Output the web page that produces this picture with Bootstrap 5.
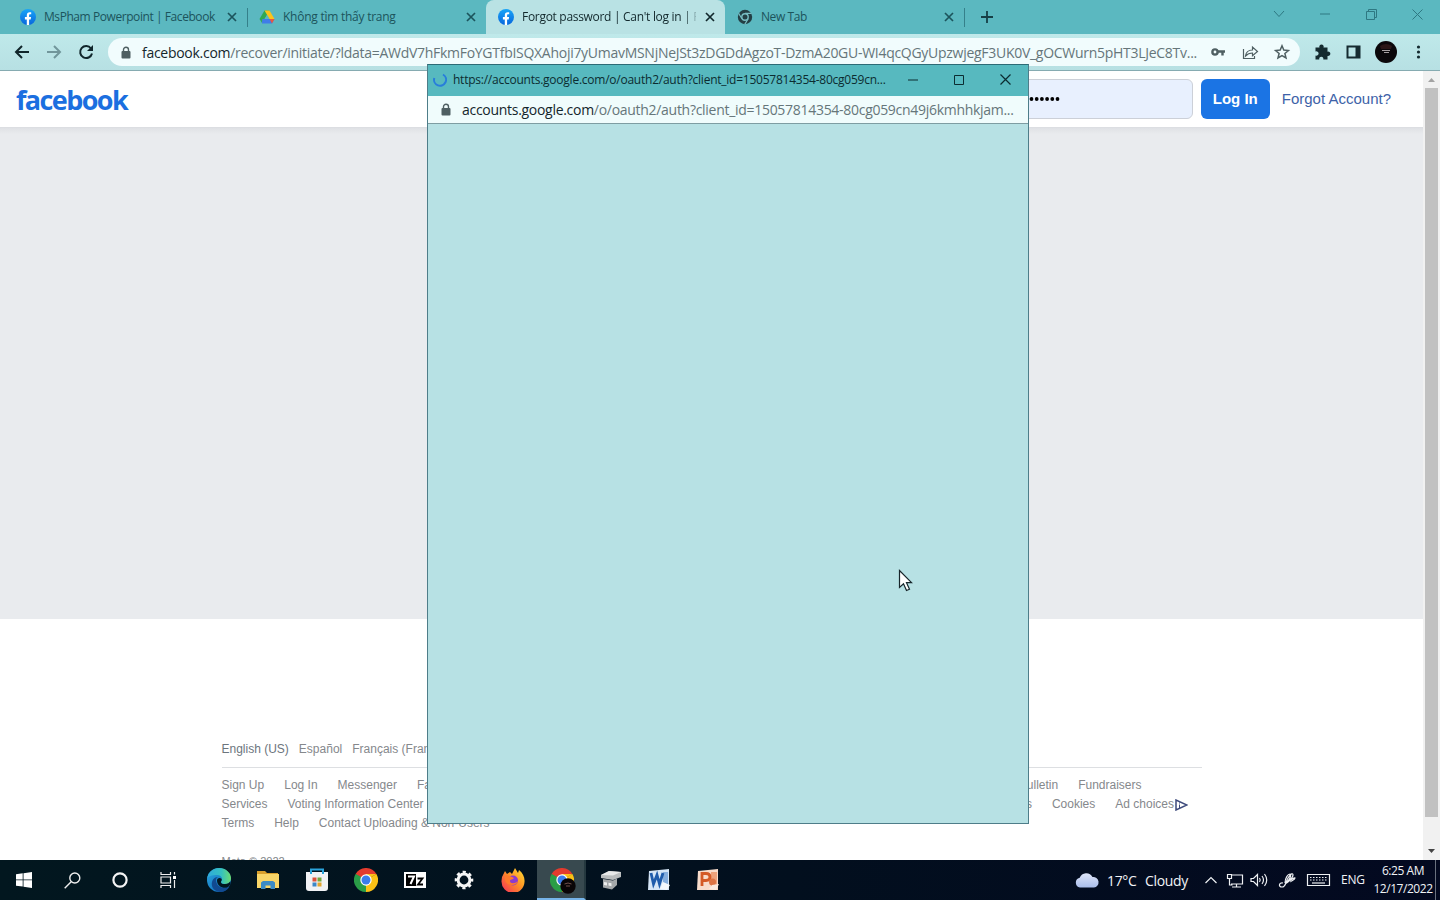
<!DOCTYPE html>
<html lang="en">
<head>
<meta charset="utf-8">
<title>Forgot password | Can't log in | Facebook</title>
<link rel="stylesheet" href="https://cdn.jsdelivr.net/npm/bootstrap@5.3.0/dist/css/bootstrap.min.css">
<script src="https://cdn.jsdelivr.net/npm/bootstrap@5.3.0/dist/js/bootstrap.bundle.min.js"></script>
<style>
body{width:1440px;height:900px;overflow:hidden;background:#fff;font-family:"Open Sans","Noto Sans",sans-serif;font-size:12px;line-height:1}
svg{display:block;flex:none}
.tabstrip{height:34px;background:#5bb8c0;padding-left:8px}
.btab{width:239px;height:34px;padding:0 10px 0 12px;color:#1c545c;position:relative}
.btab .ttl{width:174px;margin-left:8px;letter-spacing:-.25px}
.btab .tight{letter-spacing:-.43px}
.btab.on{background:#b9e2e4;color:#12282c;border-radius:8px 8px 0 0}
.btab.on .ttl{letter-spacing:-.3px;-webkit-mask-image:linear-gradient(90deg,#000 93%,transparent 102%)}
.btab.sep::after{content:"";position:absolute;right:-1px;top:8px;width:1px;height:19px;background:#35808a}
.wbtn{width:46px;height:28px;color:#2e7882}
.toolbar{height:37px;background:linear-gradient(#bfe9ea,#b7e0e3);border-bottom:1px solid #86abb1}
.omni{width:1192px;height:28px;border-radius:14px;background:#f1fcfd;margin-left:8px;padding-left:12px}
.url{font-size:14px;color:#66767a;width:1064px;margin-left:10px;letter-spacing:-.28px}
.url b,.purl b{font-weight:400;color:#14262b}
.view{height:789px}
.fbhead{height:57px;border-bottom:1px solid #dcdee2;font-family:"Liberation Sans",sans-serif;padding:0 32px 0 16px}
.fblogo{font:700 27px/30px "Open Sans",sans-serif;color:#1b6fe0;letter-spacing:-1.6px;padding-top:2px}
.pwd{width:190px;height:40px;border:1px solid #ccd0d8;border-radius:6px;background:#e8f0fe;color:#000;padding-left:24px}
.login{width:69px;height:40px;border-radius:6px;background:#1b74e4;color:#fff;font-size:15px;font-weight:700;margin:0 12px 0 8px;padding-bottom:2px}
.forgot{font-size:15px;color:#3d62a8;padding-bottom:2px}
.grayarea{height:491px;background:linear-gradient(#dfe1e5,#e9ebee 6px)}
.foot{width:980px;margin:124px 0 0 221.5px;font:12px/19px "Liberation Sans",sans-serif;color:#85888c}
.langs{height:25px;border-bottom:1px solid #dddfe2;margin-bottom:8px;line-height:12px}
.lk{gap:20px;height:19px;white-space:nowrap}
.sbar{width:17px;background:#f1f1f1}
.thumb{width:13px;height:729px;background:#c1c1c1}
.popup{position:absolute;left:427px;top:64px;width:602px;height:760px;border:1px solid #4e7d89;border-top-color:#2d6b76;background:#b7e1e4}
.ptitle{height:31px;background:#57b9bf;color:#0c2c31;padding:0 0 2px 5px}
.ptxt{width:437px;margin-left:6px;letter-spacing:-.24px}
.pw{width:46px}
.purlbar{height:28px;background:#f0fcfc;border-bottom:1px solid #7e9da2;padding-left:13px}
.purl{font-size:14px;color:#66767a;margin-left:11px;letter-spacing:-.29px}
.cursor{position:absolute;left:898px;top:569px}
.task{height:40px;background:linear-gradient(90deg,#02171f,#020f1e 55%,#030920);color:#f1f3f6;position:relative}
.ti{width:48px;height:40px}
.ta{width:48.9px;height:40px}
.ta.on{background:#38494f;border-bottom:2px solid #76b3e8;border-right:2px solid #25383f}
.weather{font-size:14px;margin-left:7px;width:93px;letter-spacing:-.35px}
.clock{width:64px;line-height:18px;text-align:center;letter-spacing:-.45px}
</style>
</head>
<body>
<svg width="0" height="0" class="position-absolute">
<defs>
<linearGradient id="fbg" x2="0" y2="1"><stop stop-color="#19a5f7"/><stop offset="1" stop-color="#0866dd"/></linearGradient>
<linearGradient id="edge" x2="1" y2="1"><stop stop-color="#2aa7e0"/><stop offset="1" stop-color="#0c5fb3"/></linearGradient>
<linearGradient id="edg2"><stop stop-color="#2fa9dd"/><stop offset=".6" stop-color="#35c1c0"/><stop offset="1" stop-color="#6bdc72"/></linearGradient>
<linearGradient id="ffx" x1="1" x2="0" y2="1"><stop stop-color="#ffe234"/><stop offset=".45" stop-color="#ff9324"/><stop offset="1" stop-color="#f5295c"/></linearGradient>
<linearGradient id="cld" x2="0" y2="1"><stop stop-color="#dfe6f8"/><stop offset="1" stop-color="#a9bdea"/></linearGradient>
<symbol id="fb" viewBox="0 0 16 16"><circle cx="8" cy="8" r="8" fill="url(#fbg)"/><path fill="#fff" d="M6.8 16v-5.6H4.9V8h1.9V6.4c0-2 1.1-3.1 2.9-3.1.7 0 1.5.1 1.5.1v1.9h-1c-.9 0-1.1.6-1.1 1.1V8h2l-.4 2.4H9.1V16z"/></symbol>
<symbol id="x" viewBox="0 0 10 10"><path d="M1 1l8 8M9 1l-8 8" stroke="currentColor" stroke-width="1.7"/></symbol>
<symbol id="lock" viewBox="0 0 10 13"><path d="M2.5 6V3.7a2.5 2.5 0 0 1 5 0V6" fill="none" stroke="#4f5f62" stroke-width="1.4"/><rect x=".5" y="5" width="9" height="7.5" rx="1" fill="#4f5f62"/></symbol>
<symbol id="chrome" viewBox="0 0 24 24"><path d="M12 12L1.6 6A12 12 0 0 1 22.4 6z" fill="#e33b2e"/><path d="M12 12L1.6 6A12 12 0 0 0 12 24z" fill="#2a9d47"/><path d="M12 12L22.4 6A12 12 0 0 1 12 24z" fill="#fbc116"/><path d="M12 6h10.4L12 12z" fill="#fbc116"/><path d="M1.6 6l5.2 9L12 12z" fill="#2a9d47"/><path d="M17.2 15L12 24 12 12z" fill="#fbc116"/><path d="M1.6 6H12v6z" fill="#e33b2e"/><path d="M1.6 6l5.2 9 2-5z" fill="#2a9d47"/><circle cx="12" cy="12" r="5.7" fill="#fff"/><circle cx="12" cy="12" r="4.5" fill="#3b7dec"/></symbol>
</defs>
</svg>

<div class="tabstrip d-flex align-items-start">
  <div class="btab sep d-flex align-items-center"><svg width="16" height="16"><use href="#fb"/></svg><div class="ttl tight text-nowrap lh-base">MsPham Powerpoint | Facebook</div><svg class="ms-auto" width="10" height="10"><use href="#x"/></svg></div>
  <div class="btab d-flex align-items-center"><svg width="16" height="16" viewBox="0 0 16 16"><path d="M5.5 1.5h5L8 6 3 14 .5 10z" fill="#31a853"/><path d="M5.500 1.500h5L15.500 10h-5z" fill="#fbc31c"/><path d="M3.200 10h12.300L13 14.500H3z" fill="#3f7de8"/><path d="M10.600 10h4.900L13 14.500z" fill="#e9573f"/><path d="M8 6l2.400 4H5.600z" fill="#5bb8c0"/></svg><div class="ttl text-nowrap lh-base">Không tìm thấy trang</div><svg class="ms-auto" width="10" height="10"><use href="#x"/></svg></div>
  <div class="btab on d-flex align-items-center"><svg width="16" height="16"><use href="#fb"/></svg><div class="ttl text-nowrap overflow-hidden lh-base">Forgot password | Can't log in | F</div><svg class="ms-auto" width="10" height="10"><use href="#x"/></svg></div>
  <div class="btab sep d-flex align-items-center"><svg width="16" height="16" viewBox="0 0 16 16"><circle cx="8" cy="8" r="7.200" fill="#233f45"/><circle cx="8" cy="8" r="3.200" fill="none" stroke="#77bdc3" stroke-width="1.400"/><path d="M8 4.400h6.600M4.900 9.800L1.600 4.200M11.100 9.800L7.800 15.400" stroke="#77bdc3" stroke-width="1.200"/></svg><div class="ttl tight text-nowrap lh-base">New Tab</div><svg class="ms-auto" width="10" height="10"><use href="#x"/></svg></div>
  <svg class="align-self-center" width="29" height="12"><path d="M23 0v12M17 6h12" stroke="#163f46" stroke-width="1.800"/></svg>
  <div class="d-flex ms-auto">
    <div class="wbtn d-flex align-items-center justify-content-center"><svg width="12" height="8"><path d="M1 1l5 5.500L11 1" fill="none" stroke="currentColor"/></svg></div>
    <div class="wbtn d-flex align-items-center justify-content-center"><svg width="10" height="2"><path d="M0 1h10" stroke="currentColor"/></svg></div>
    <div class="wbtn d-flex align-items-center justify-content-center"><svg width="11" height="11"><path d="M.5 2.500h8v8h-8zM2.500 2.500v-2h8v8h-2" fill="none" stroke="currentColor"/></svg></div>
    <div class="wbtn d-flex align-items-center justify-content-center"><svg width="11" height="11"><path d="M.5.5l10 10M10.500.5l-10 10" stroke="currentColor"/></svg></div>
  </div>
</div>

<div class="toolbar d-flex align-items-center">
  <svg width="100" height="16" viewBox="0 0 100 16" fill="none" stroke-width="2"><path d="M29 8H16M22 2l-6 6 6 6" stroke="#10262b"/><path d="M47 8h13M54 2l6 6-6 6" stroke="#71969b"/><path d="M91 4.500A6 6 0 1 0 92 9.500" stroke="#10262b"/><path d="M93 1v6h-6z" fill="#10262b"/></svg>
  <div class="omni d-flex align-items-center">
    <svg width="12" height="13"><use href="#lock"/></svg>
    <div class="url text-nowrap lh-base"><b>facebook.com</b>/recover/initiate/?ldata=AWdV7hFkmFoYGTfbISQXAhoji7yUmavMSNjNeJSt3zDGDdAgzoT-DzmA20GU-WI4qcQGyUpzwjegF3UK0V_gOCWurn5pHT3LJeC8Tv...</div>
    <svg class="ms-1" width="86" height="16" viewBox="0 0 86 16" fill="none" stroke="#4f5f62" stroke-width="1.300"><circle cx="5" cy="8" r="2.600" stroke-width="2.400"/><path d="M8 7.500h7M12.500 7.500v4" stroke-width="2.400"/><path d="M33.500 5v9.500h11V12M35.500 12c.5-4 3-6 7-6V3l5 4.500-5 4.300V9c-3 0-5 .8-7 3z" stroke-width="1.200"/><path d="M72 1.800l1.800 4.300 4.600.4-3.500 3 1.100 4.500-4-2.400-4 2.400 1.100-4.500-3.500-3 4.600-.4z" stroke-width="1.500"/></svg>
  </div>
  <svg width="130" height="24" viewBox="1305 0 130 24" style="margin-left:5px"><path d="M1315.500 7.500h4a2.200 2.200 0 1 1 4 0h4v4.200a2.200 2.200 0 1 1 0 4.200v3.600h-4.200a2.100 2.100 0 1 0-4 0h-3.800v-4a2.200 2.200 0 1 0 0-4z" fill="#152b30"/><path d="M1347.500 6.500h12v11h-12z" fill="none" stroke="#152b30" stroke-width="2"/><path d="M1355.500 6h4.500v12h-4.500z" fill="#152b30"/><circle cx="1386" cy="12" r="11" fill="#0b080b"/><path d="M1380 6q6-4 12 0l-1 3h-10z" fill="#2b1718"/><path d="M1382 10.500h8M1384 12.500h5" stroke="#a7a0a2"/><g fill="#152b30"><circle cx="1418.500" cy="7" r="1.600"/><circle cx="1418.500" cy="12" r="1.600"/><circle cx="1418.500" cy="17" r="1.600"/></g></svg>
</div>

<div class="view d-flex">
  <div class="flex-grow-1 overflow-hidden">
    <div class="fbhead d-flex align-items-center">
      <div class="fblogo">facebook</div>
      <div class="pwd ms-auto d-flex align-items-center"><svg width="34" height="6"><g fill="#000"><circle cx="3.500" cy="3" r="1.900"/><circle cx="8.700" cy="3" r="1.900"/><circle cx="13.900" cy="3" r="1.900"/><circle cx="19.100" cy="3" r="1.900"/><circle cx="24.300" cy="3" r="1.900"/><circle cx="29.500" cy="3" r="1.900"/></g></svg></div>
      <div class="login d-flex align-items-center justify-content-center">Log In</div>
      <div class="forgot">Forgot Account?</div>
    </div>
    <div class="grayarea"></div>
    <div class="foot">
      <div class="langs d-flex gap-2"><span class="text-secondary me-1" style="margin-right:2px!important">English (US)</span><span style="margin-right:2px">Español</span><span>Français (France)</span></div>
      <div class="lk d-flex" style="width:920px"><span>Sign Up</span><span>Log In</span><span>Messenger</span><span>Facebook Lite</span><span class="ms-auto">Bulletin</span><span>Fundraisers</span></div>
      <div class="lk d-flex" style="width:966.500px"><span>Services</span><span>Voting Information Center</span><span class="ms-auto">Careers</span><span>Cookies</span><span class="d-flex align-items-center">Ad choices<svg style="margin-left:1px" width="13" height="12"><path d="M1 1v10l11-5z" fill="#fff" stroke="#3d4a7c" stroke-width="1.500"/><path d="M4.500 3.500v1M4.500 5.500v3.500" stroke="#3d4a7c"/></svg></span></div>
      <div class="lk d-flex"><span>Terms</span><span>Help</span><span>Contact Uploading &amp; Non-Users</span></div>
      <div style="font-size:11px;margin-top:19px">Meta © 2022</div>
    </div>
  </div>
  <div class="sbar d-flex flex-column align-items-center justify-content-between">
    <svg width="17" height="17"><path d="M5 11h7L8.500 7z" fill="#a3a3a3"/></svg>
    <div class="thumb"></div><div class="flex-grow-1"></div>
    <svg width="17" height="17"><path d="M5 6h7L8.500 10z" fill="#444"/></svg>
  </div>
</div>

<div class="task d-flex align-items-center">
  <div class="ti d-flex align-items-center justify-content-center"><svg width="16" height="16" fill="#fff"><path d="M0 2.200L6.700 1.300v6.200H0zM7.500 1.200L16 0v7.500H7.500zM0 8.300h6.700v6.300L0 13.700zM7.500 8.300H16V16l-8.500-1.200z"/></svg></div>
  <div class="ti d-flex align-items-center justify-content-center"><svg width="17" height="17" fill="none" stroke="#eee" stroke-width="1.400"><circle cx="10.800" cy="6" r="5"/><path d="M7.200 9.700L.7 16.300"/></svg></div>
  <div class="ti d-flex align-items-center justify-content-center"><svg width="16" height="16"><circle cx="8" cy="8" r="6.600" fill="none" stroke="#f4f4f4" stroke-width="2.200"/></svg></div>
  <div class="ti d-flex align-items-center justify-content-center"><svg width="17" height="16" fill="none" stroke="#eee" stroke-width="1.200"><path d="M1 0v2.500h9.500V0M1 5h9.500v6H1zM1 16v-2.500h9.500V16M14.500 0v2.500M14.500 8v8"/><path d="M13 4h3v3h-3z" fill="#fff" stroke="none"/></svg></div>
  <div class="d-flex" style="margin-left:3px">
    <div class="ta d-flex align-items-center justify-content-center"><svg width="24" height="24" viewBox="0 0 24 24"><circle cx="12" cy="12" r="12" fill="url(#edge)"/><path d="M0 11C1 4 6 0 12 0c7 0 12 5 12 10 0 4-3 6-6 6s-4-1-4-2 1-1.500 1-3c0-2-2-4-5-4-5 0-9 1-10 4z" fill="url(#edg2)"/><path d="M9 12c0 5 4 8 9 8 2 0 4-1 4.500-1.300C20.500 22 17 24 13 24 6 23 4 18 5 14c1-4 4-5 6-5-1.500.7-2 2-2 3z" fill="#114a91"/><path d="M12.500 10c1.500 0 2.500 1 2.200 2.200-.4 1-1 1.500-.7 2.200C14.500 16 17 16 18 16c3 0 4.500-1.500 5.200-2.500 1 2-1 6-4.700 6.300C14 20 10 17 10 12.500c0-1.500 1-2.500 2.500-2.500z" fill="#02171f"/></svg></div>
    <div class="ta d-flex align-items-center justify-content-center"><svg width="22" height="20" viewBox="0 0 22 20"><path d="M0 1h8l2 2h11v5H0z" fill="#d89f2c"/><path d="M0 4h22v14H0z" fill="#f8d568"/><path d="M4 19v-6.500L6 11h10l2 1.500V19h-4.500v-3.500h-5V19z" fill="#3c8bc5"/></svg></div>
    <div class="ta d-flex align-items-center justify-content-center"><svg width="24" height="24" viewBox="0 0 24 24"><path d="M6 6V1.500h12V6" fill="none" stroke="#2aa4dc" stroke-width="2"/><path d="M1 4h22v16q0 3-3 3H4q-3 0-3-3z" fill="#f1f2f5"/><path d="M6 4v2M18 4v2" stroke="#2aa4dc" stroke-width="2"/><path d="M7.500 9.500h4v4h-4z" fill="#df513b"/><path d="M12.500 9.500h4v4h-4z" fill="#73a73c"/><path d="M7.500 14.500h4v4h-4z" fill="#3c86c7"/><path d="M12.500 14.500h4v4h-4z" fill="#e2a52e"/></svg></div>
    <div class="ta d-flex align-items-center justify-content-center"><svg width="24" height="24"><use href="#chrome"/></svg></div>
    <div class="ta d-flex align-items-center justify-content-center"><svg width="22" height="16" viewBox="0 0 22 16"><path d="M0 0h22v16H0z" fill="#fff"/><path d="M2 2h10v12H2z"/><path d="M4 4.500h6L6.500 12" fill="none" stroke="#fff" stroke-width="2"/><path d="M13.500 6.500h5l-4.500 6h5" fill="none" stroke="#000" stroke-width="1.800"/></svg></div>
    <div class="ta d-flex align-items-center justify-content-center"><svg width="20" height="20" viewBox="-10 -10 20 20"><circle r="5.900" fill="none" stroke="#f5f5f5" stroke-width="3"/><circle r="7.800" fill="none" stroke="#f5f5f5" stroke-width="3" stroke-dasharray="3.100 3.026" stroke-dashoffset="1.550"/></svg></div>
    <div class="ta d-flex align-items-center justify-content-center"><svg width="24" height="24" viewBox="0 0 24 24"><path d="M1 9l3-6 2 3 3-2 2 2 3-6 3 5 1-3c4 3 6 8 5.500 12A11.500 11.500 0 0 1 .5 13z" fill="url(#ffx)"/><circle cx="12" cy="12.500" r="5" fill="#8b3bd0"/><path d="M4 8c2-1 5 0 7 1l2 1c-1 2-4 1-4 3 0 3 5 3 8 0-1 5-11 6-13-1z" fill="#ff7a2b"/></svg></div>
    <div class="ta on d-flex align-items-center justify-content-center"><svg class="ms-1 mt-1" width="27" height="28" viewBox="-1 -1 27 28"><use href="#chrome" width="24" height="24"/><circle cx="18" cy="18" r="7.700" fill="#090507"/><path d="M14.500 16q3.500-2 7 0M16 18h4" stroke="#72504c" fill="none"/></svg></div>
    <div class="ta d-flex align-items-center justify-content-center"><svg width="22" height="20" viewBox="0 0 22 20"><path d="M1 5L9 1l12 1v5l-8 3L1 8z" fill="#b9bcbd"/><path d="M1 5l8-4 12 1-8 3.500z" fill="#e7e8e8"/><path d="M3 9l10 1.500 4-2V15l-5 4.500-9-2z" fill="#a5a8aa"/><path d="M4 12l3 .5v3L4 15zM8.500 12.700l3 .5v3l-3-.6z" fill="#eee"/></svg></div>
    <div class="ta d-flex align-items-center justify-content-center"><svg width="22" height="22" viewBox="0 0 22 22"><path d="M1 2L21 0v21H0z" fill="#d5e5f6"/><path d="M15 3h5v14h-5z" fill="#85aede"/><path d="M3 4l2.500 11L9 6l2.500 9L15 4" fill="none" stroke="#1e5bab" stroke-width="2.800"/><path d="M12 20l3-7 7 3-3 5z" fill="#f4f8fc"/></svg></div>
    <div class="ta d-flex align-items-center justify-content-center"><svg width="22" height="22" viewBox="0 0 22 22"><path d="M1 2L21 0v21H0z" fill="#f8dccb"/><path d="M14 3h6v15h-6z" fill="#eea27b"/><path d="M5 17V4.500h4q4 0 4 3.500t-4 3.500H6" fill="none" stroke="#d45a26" stroke-width="2.800"/><circle cx="15.500" cy="13" r="3.500" fill="#dd7445"/><path d="M12 20l3-4 7-1-3 6z" fill="#fbebe1"/></svg></div>
  </div>
  <div class="ms-auto d-flex align-items-center">
    <svg width="26" height="18" viewBox="0 0 26 18"><path d="M6 16.500a5 5 0 0 1-.3-9.800A7 7 0 0 1 18.500 6a5.300 5.300 0 0 1 1.500 10.500z" fill="url(#cld)"/></svg>
    <div class="weather lh-base text-nowrap d-flex"><span style="width:38px">17°C</span><span>Cloudy</span></div>
    <svg width="132" height="20" viewBox="1200 0 132 20" fill="none" stroke="#eef0f3" stroke-width="1.200"><path d="M1205.500 13l5.500-5.500 5.500 5.500"/><path d="M1231 5h11.500v9H1231M1236.500 14v3M1232 17h9M1227.500 4.500h4v4h-4zM1229.500 8.500V15h3"/><path d="M1251 8.500h2.500l4-4v11l-4-4H1251zM1259.500 8q1.500 2 0 4M1262 6q3 4 0 8M1264.500 4q4.500 6 0 12"/><path d="M1283 13c-4-1-5 4-1 4 4 0 3-4 6-9 3-5 5-5 5-3 0 3-6 8-8 9M1285 13c0-5 3-9 5-9 2 1-1 7-4 9M1288 12c3-2 6-5 7-4 0 2-5 3-4 4"/><path d="M1307.500 4.500h22v11h-22z"/><path d="M1310 7.500h18M1310 10h18" stroke-dasharray="1.500 1.500"/><path d="M1312 13h13"/></svg>
    <div class="lh-base" style="margin-left:9px;width:30px;letter-spacing:-.2px">ENG</div>
    <div class="clock"><div>6:25 AM</div><div class="text-nowrap">12/17/2022</div></div>
    <svg width="5" height="40"><path d="M.5 0v40" stroke="#69707e"/></svg>
  </div>
</div>

<div class="popup">
  <div class="ptitle d-flex align-items-center">
    <svg width="14" height="14" fill="none"><path d="M10 1.500A6 6 0 1 1 1.300 5" stroke="#287ddb" stroke-width="2"/></svg>
    <div class="ptxt text-nowrap lh-base">https://accounts.google.com/o/oauth2/auth?client_id=15057814354-80cg059cn...</div>
    <div class="pw d-flex justify-content-center"><svg width="10" height="2"><path d="M0 1h10" stroke="#0c2c31"/></svg></div>
    <div class="pw d-flex justify-content-center"><svg width="10" height="10"><path d="M.5.5h9v9h-9z" fill="none" stroke="#0c2c31"/></svg></div>
    <div class="pw d-flex justify-content-center"><svg width="11" height="11"><path d="M.5.5l10 10M10.500.5l-10 10" stroke="#0c2c31" stroke-width="1.200"/></svg></div>
  </div>
  <div class="purlbar d-flex align-items-center">
    <svg width="10" height="13"><use href="#lock"/></svg>
    <div class="purl text-nowrap lh-base"><b>accounts.google.com</b>/o/oauth2/auth?client_id=15057814354-80cg059cn49j6kmhhkjam...</div>
  </div>
</div>
<svg class="cursor" width="16" height="24"><path d="M1.500 1.500v17l4-3.700 3 6.700 3-1.300-3-6.500h5z" fill="#fff" stroke="#17262b" stroke-width="1.200"/></svg>
</body>
</html>
